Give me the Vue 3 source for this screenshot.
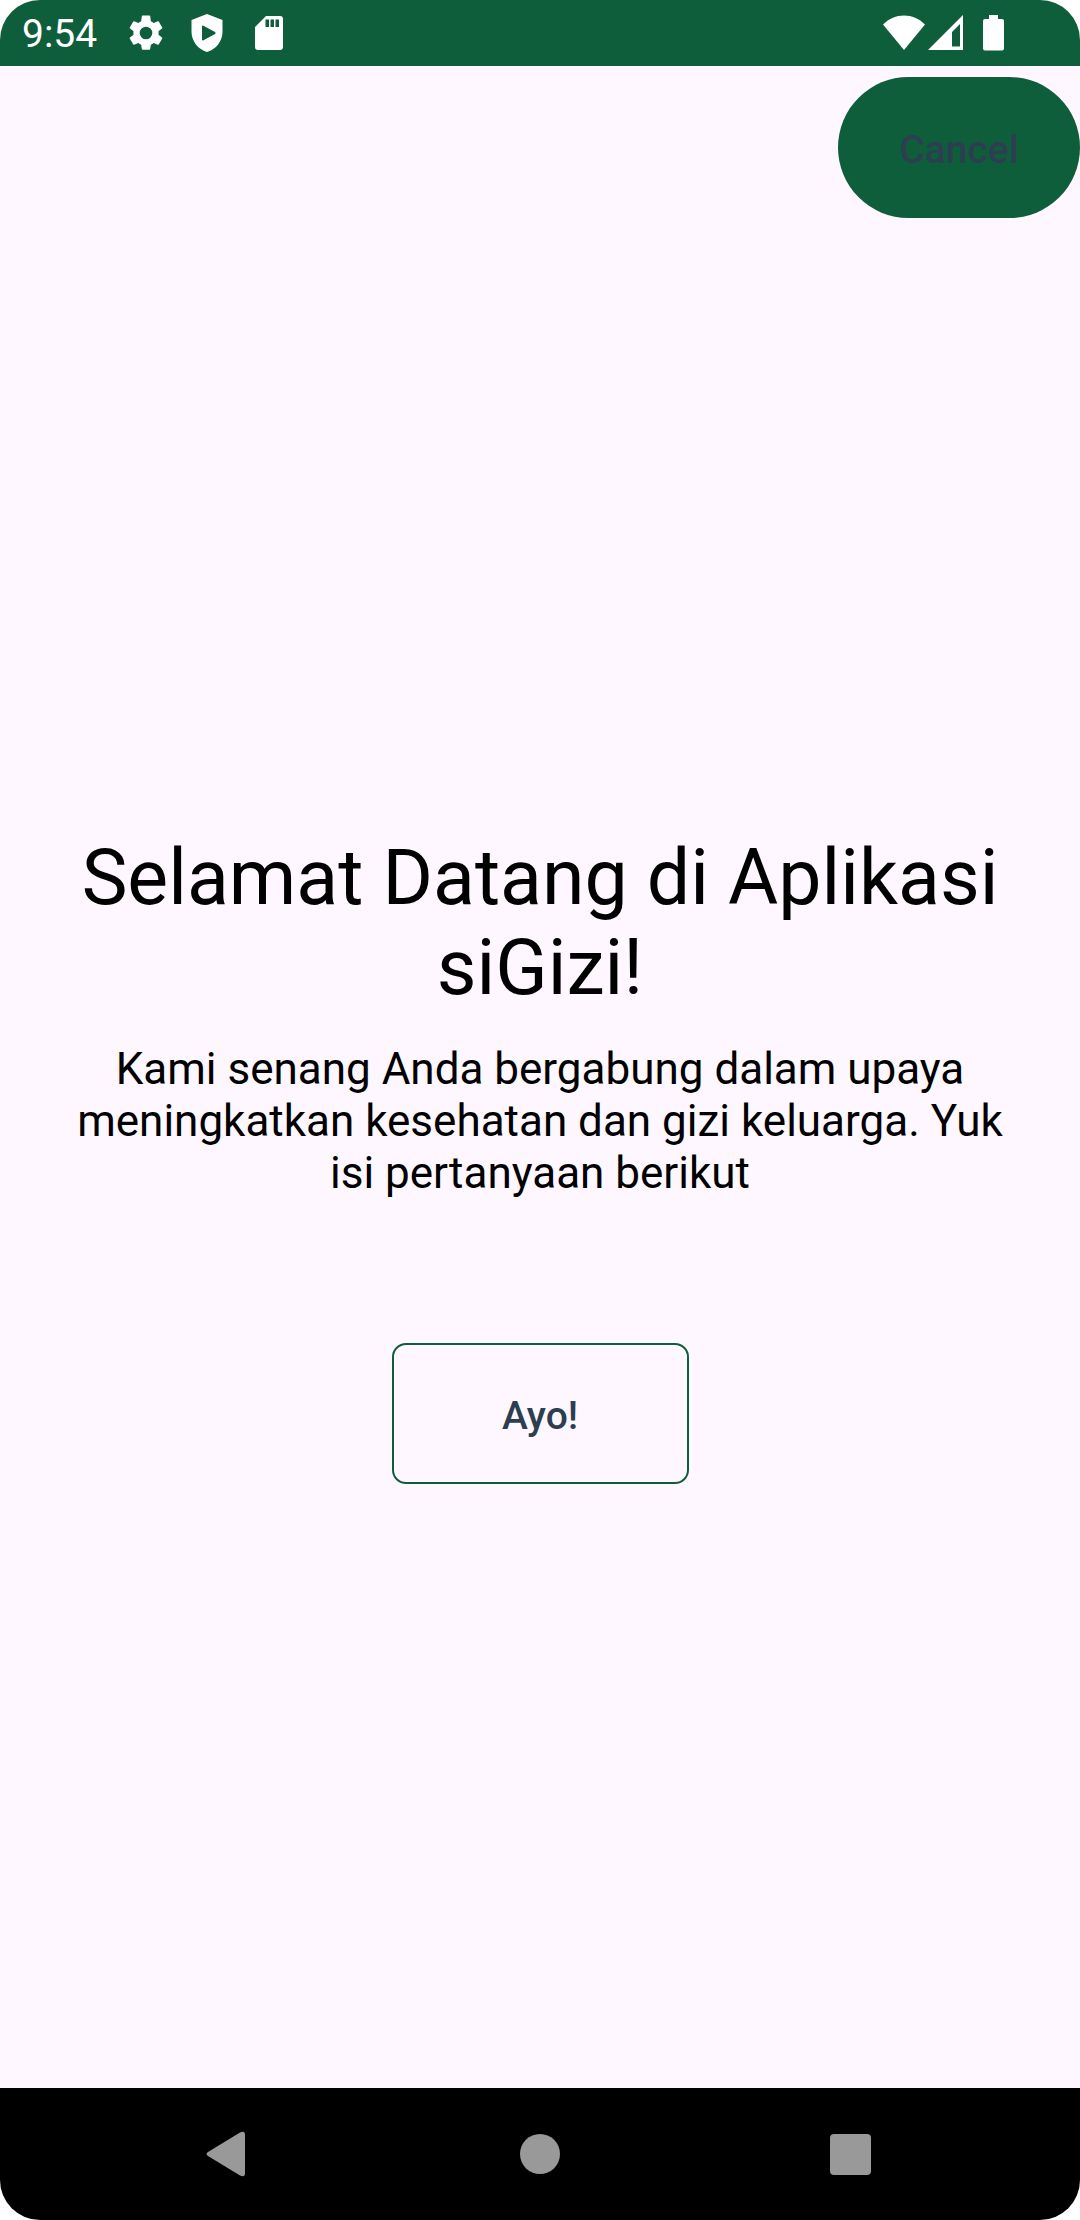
<script setup>
const time = '9:54'
const title = 'Selamat Datang di Aplikasi siGizi!'
const intro =
  'Kami senang Anda bergabung dalam upaya meningkatkan kesehatan dan gizi keluarga. Yuk isi pertanyaan berikut'
</script>

<template>
  <div class="screen">
    <header class="status">
      <div class="status-left">
        <time class="clock">{{ time }}</time>
        <svg class="gear" width="42" height="42" viewBox="0 0 24 24" aria-hidden="true">
          <path d="M19.14 12.94c.04-.3.06-.61.06-.94 0-.32-.02-.64-.07-.94l2.03-1.58a.49.49 0 0 0 .12-.61l-1.92-3.32a.49.49 0 0 0-.59-.22l-2.39.96c-.5-.38-1.03-.7-1.62-.94L14.4 2.3a.48.48 0 0 0-.48-.3h-3.84a.48.48 0 0 0-.47.41L9.25 5.35c-.59.24-1.13.57-1.62.94l-2.39-.96a.48.48 0 0 0-.59.22L2.74 8.87a.48.48 0 0 0 .12.61l2.03 1.58c-.05.3-.09.63-.09.94s.02.64.07.94l-2.03 1.58a.49.49 0 0 0-.12.61l1.92 3.32c.12.22.37.29.59.22l2.39-.96c.5.38 1.03.7 1.62.94l.36 2.54c.05.24.24.41.48.41h3.84c.24 0 .44-.17.47-.41l.36-2.54c.59-.24 1.13-.56 1.62-.94l2.39.96c.22.08.47 0 .59-.22l1.92-3.32a.48.48 0 0 0-.12-.61zM12 15.6A3.6 3.6 0 1 1 12 8.4a3.6 3.6 0 0 1 0 7.2z" />
        </svg>
        <svg class="shield" width="32" height="40" viewBox="0 0 32 40" aria-hidden="true">
          <path fill-rule="evenodd" d="M16 1 31.500 7V19C31.500 28 25 36.500 16 39 7 36.500.5 28 .5 19V7zM11 13.500V26.500Q11 28 12.500 27.200L24 21Q25.500 20 24 19L12.500 12.800Q11 12 11 13.500z" />
        </svg>
        <svg class="card" width="28" height="36" viewBox="0 0 28 36" aria-hidden="true">
          <path fill-rule="evenodd" d="M11 1H25Q28 1 28 4V32Q28 35 25 35H3Q0 35 0 32V12zM10.500 4.500V12H14V4.500zM15.500 4.500V12H19V4.500zM20.500 4.500V12H24V4.500z" />
        </svg>
      </div>
      <div class="status-right">
        <svg width="42" height="36" viewBox="0 0 42 36" aria-hidden="true">
          <path d="M21 35 0 9.500C12-2.500 30-2.500 42 9.500z" />
        </svg>
        <svg class="signal" width="35" height="36" viewBox="0 0 35 36" aria-hidden="true">
          <path fill-rule="evenodd" d="M35 0V35H0zM32 9 24 17V31.500H32z" />
        </svg>
        <svg width="21" height="36" viewBox="0 0 21 36" aria-hidden="true">
          <path d="M6 0H15V4H19Q21 4 21 6V33.500Q21 35.500 19 35.500H2Q0 35.500 0 33.500V6Q0 4 2 4H6z" />
        </svg>
      </div>
    </header>

    <div class="top-action">
      <button type="button" class="btn cancel">Cancel</button>
    </div>

    <main class="welcome">
      <h1>{{ title }}</h1>
      <p>{{ intro }}</p>
      <button type="button" class="btn start">Ayo!</button>
    </main>

    <nav class="system-nav" aria-label="Navigasi sistem">
      <button type="button" aria-label="Kembali">
        <svg width="48" height="48" viewBox="0 0 48 48" aria-hidden="true">
          <path d="M2 22 34 2.500Q39 0 39 5V43Q39 48 34 45.500L2 26Q-1 24 2 22z" />
        </svg>
      </button>
      <button type="button" aria-label="Beranda">
        <svg width="48" height="48" viewBox="0 0 48 48" aria-hidden="true">
          <circle cx="24" cy="24" r="20" />
        </svg>
      </button>
      <button type="button" aria-label="Aplikasi terbaru">
        <svg width="48" height="48" viewBox="0 0 48 48" aria-hidden="true">
          <rect x="4" y="4" width="41" height="41" rx="4" />
        </svg>
      </button>
    </nav>
  </div>
</template>

<style>
body {
  margin: 0;
  background: #fff;
}
</style>

<style scoped>
.screen {
  display: flex;
  flex-direction: column;
  min-height: 100vh;
  overflow: hidden;
  border-radius: 40px;
  background: #fef7ff;
  color: #000;
  font-family: Roboto, "Liberation Sans", sans-serif;
}

.status {
  display: flex;
  align-items: center;
  justify-content: space-between;
  height: 66px;
  padding: 0 76px 0 22px;
  background: #0f5e3b;
  color: #fff;
}

.status svg {
  display: block;
  fill: #fff;
}

.status-left,
.status-right {
  display: flex;
  align-items: center;
}

.clock {
  padding-top: 2px;
  font-size: 39px;
  line-height: 46px;
}

.gear {
  margin-left: 28px;
}

.shield {
  margin-left: 24px;
}

.card {
  margin-left: 32px;
}

.signal {
  margin: 0 20px 0 3px;
}

.top-action {
  display: flex;
  justify-content: flex-end;
  padding-top: 11px;
}

.btn {
  height: 141px;
  padding: 5px 0 0;
  color: #2c3e50;
  font-family: inherit;
  font-size: 39px;
  font-weight: 500;
}

.cancel {
  width: 242px;
  border: 0;
  border-radius: 71px;
  background: #0f5e3b;
}

.start {
  width: 297px;
  margin-top: 144px;
  border: 2px solid #0f5e3b;
  border-radius: 14px;
  background: transparent;
}

.welcome {
  display: flex;
  flex: 1;
  flex-direction: column;
  align-items: center;
  justify-content: center;
  padding: 10px 66px 0;
  text-align: center;
}

h1 {
  margin: 0;
  font-size: 77px;
  font-weight: 400;
  line-height: 90px;
}

p {
  margin: 30px 0 0;
  font-size: 44px;
  line-height: 52px;
}

.system-nav {
  display: flex;
  justify-content: center;
  height: 132px;
  background: #000;
}

.system-nav button {
  display: flex;
  align-items: center;
  justify-content: center;
  width: 310px;
  padding: 0;
  border: 0;
  background: transparent;
}

.system-nav svg {
  fill: #999;
}
</style>
